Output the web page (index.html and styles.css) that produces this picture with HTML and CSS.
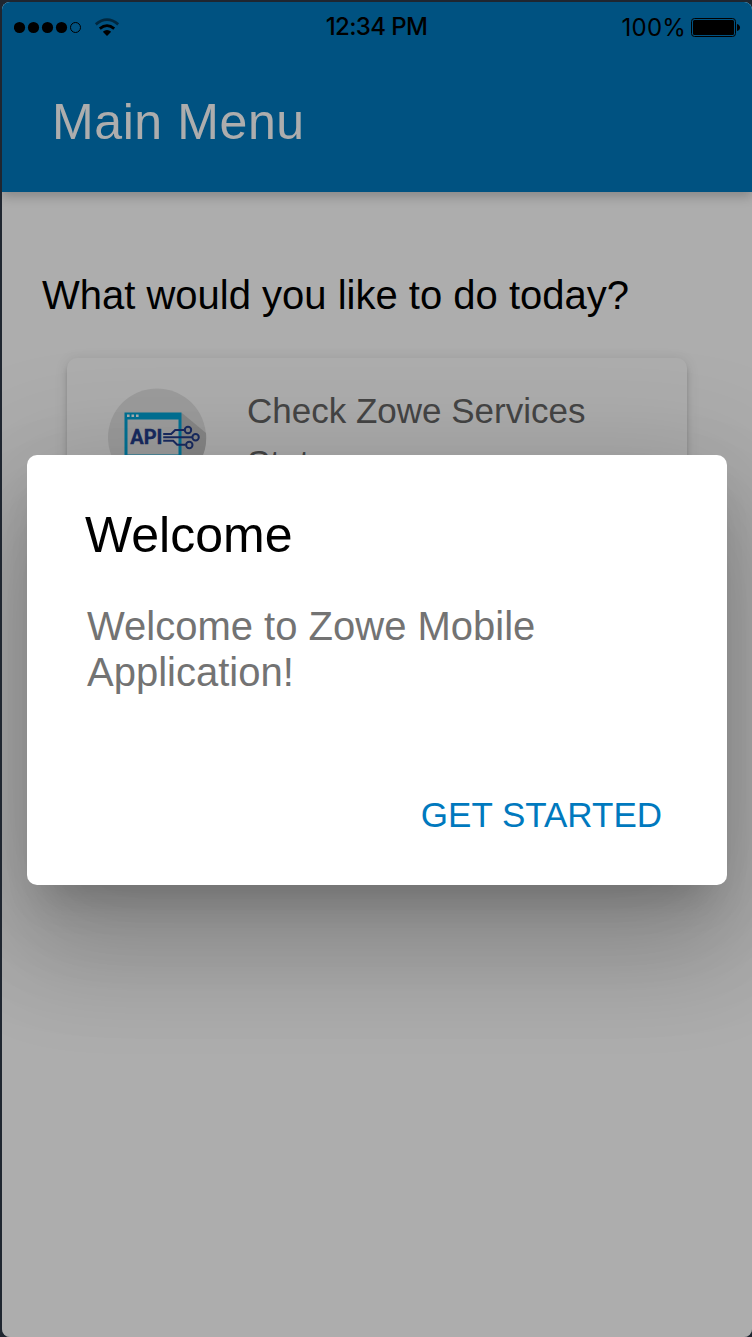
FILE: index.html
```html
<!DOCTYPE html>
<html lang="en">
<head>
<meta charset="utf-8">
<title>Zowe Mobile</title>
<link rel="stylesheet" href="styles.css">
</head>
<body>
<div class="phone">
  <header class="header">
    <div class="status">
      <svg class="signal" width="112" height="22" viewBox="0 0 112 22">
        <circle cx="5.5" cy="11.5" r="5.6"/><circle cx="19.5" cy="11.5" r="5.6"/><circle cx="33.5" cy="11.5" r="5.6"/><circle cx="47.5" cy="11.5" r="5.6"/>
        <circle cx="61.5" cy="11.5" r="5" fill="none" stroke="#000" stroke-width="1"/>
        <path d="M81.8 8.3 Q93 -1 104.2 8.3" fill="none" stroke="#000" stroke-opacity=".5" stroke-width="2.8"/>
        <path d="M85.8 12.6 Q93 6.6 100.2 12.6" fill="none" stroke="#000" stroke-width="2.8"/>
        <path d="M88.8 15.8 Q93 12.4 97.2 15.8 L93 20Z"/>
      </svg>
      <span class="time">12:34 PM</span>
      <span class="power">100%
        <svg class="battery" width="50" height="20" viewBox="0 0 50 20">
          <rect x=".5" y=".5" width="44" height="18" rx="3" fill="none" stroke="#000"/>
          <rect x="2" y="2" width="41" height="15" rx="1.5"/>
          <path d="M46 6 Q49 7 49 9.5 Q49 12 46 13Z"/>
        </svg>
      </span>
    </div>
    <h1 class="title">Main Menu</h1>
  </header>
  <main class="content">
    <h2 class="question">What would you like to do today?</h2>
    <section class="card">
      <svg class="api" width="100" height="100" viewBox="0 0 100 100">
        <circle cx="50" cy="49.5" r="49" fill="#e6e6e6"/>
        <path d="M75 25 L99 45 A50 50 0 0 1 66 97 L17 76Z" fill="#c8c8c8"/>
        <rect x="17.5" y="24.5" width="57" height="53" fill="#00a8dc"/>
        <rect x="20.5" y="31.5" width="51" height="35" fill="#e9e9e9"/>
        <path d="M20 26.5h2.6v2.6H20zM24.5 26.5h2.6v2.6h-2.6zM29 26.5h2.6v2.6H29z" fill="#fff"/>
        <text class="api-text" x="23.2" y="56">API</text>
        <g fill="none" stroke="#25408f" stroke-width="2">
          <path d="M56.2 46h8l4-4H78M56.2 49.3H85M56.2 52.8h10l4 4H78.5"/>
          <circle cx="81" cy="42" r="3.2"/><circle cx="88.6" cy="49.2" r="3.2"/><circle cx="82.3" cy="57" r="3.2"/>
        </g>
      </svg>
      <p class="label">Check Zowe Services Status</p>
    </section>
  </main>
  <div class="backdrop">
    <div class="dialog" role="dialog">
      <h2 class="dialog-title">Welcome</h2>
      <p class="message">Welcome to Zowe Mobile Application!</p>
      <button class="action">GET STARTED</button>
    </div>
  </div>
</div>
</body>
</html>
```
FILE: styles.css
```css
* { box-sizing: border-box; }
body {
  margin: 0;
  padding: 2px 0 0 2px;
  background: #1f2630;
  font-family: "Liberation Sans", Arial, sans-serif;
}
h1, h2, p { margin: 0; font-weight: 400; }
.phone {
  position: relative;
  width: 750px;
  height: 1335px;
  border-radius: 8px;
  overflow: hidden;
  background: #fff;
}
.header {
  position: relative;
  height: 190px;
  background: #0079be;
  box-shadow: 0 5px 10px rgba(0,0,0,.21);
}
.status {
  display: grid;
  grid-template-columns: 1fr auto 1fr;
  align-items: center;
  height: 50px;
  padding: 0 11px 0 12px;
  font: 24px Inter, sans-serif;
  color: #000;
}
.time { margin: -1px 2px 0 0; font-weight: 500; letter-spacing: -.6px; }
.power { display: flex; align-items: center; justify-content: flex-end; gap: 5px; letter-spacing: .2px; }
.battery { margin-top: 2px; }
.title {
  padding: 41px 50px 0;
  font-size: 50px;
  line-height: 58px;
  letter-spacing: .6px;
  color: #fff;
}
.content { padding: 80px 40px 0; }
.question { font-size: 40px; line-height: 46px; color: #000; }
.card {
  display: flex;
  gap: 40px;
  width: 620px;
  height: 260px;
  margin: 40px 0 0 25px;
  padding: 30px 40px;
  border-radius: 10px;
  background: #fff;
  box-shadow: 0 7.5px 2.5px -5px rgba(0,0,0,.2), 0 5px 5px rgba(0,0,0,.14), 0 2.5px 12.5px rgba(0,0,0,.12);
}
.api { flex: none; }
.api-text { font: bold 20px Roboto, sans-serif; fill: #25408f; stroke: #25408f; stroke-width: .4px; }
.label { margin-top: -3px; font-size: 35px; line-height: 52px; color: #666; }
.backdrop {
  position: absolute;
  inset: 0;
  display: flex;
  align-items: flex-start;
  justify-content: center;
  padding-top: 453px;
  background: rgba(0,0,0,.32);
}
.dialog {
  display: flex;
  flex-direction: column;
  width: 700px;
  height: 430px;
  padding: 51px 60px 30px;
  border-radius: 10px;
  background: #fff;
  box-shadow: 0 27.5px 37.5px -17.5px rgba(0,0,0,.18), 0 63px 105px 8px rgba(0,0,0,.15), 0 24px 120px 21px rgba(0,0,0,.13);
}
.dialog-title { margin-left: -2px; font-size: 50px; line-height: 58px; color: #000; }
.message { margin-top: 39px; font-size: 40px; line-height: 46px; color: #737373; }
.action {
  align-self: flex-end;
  margin: auto 0 0;
  padding: 0 5px;
  border: 0;
  background: none;
  font: 35px/80px "Liberation Sans", Arial, sans-serif;
  color: #0079be;
}
```
